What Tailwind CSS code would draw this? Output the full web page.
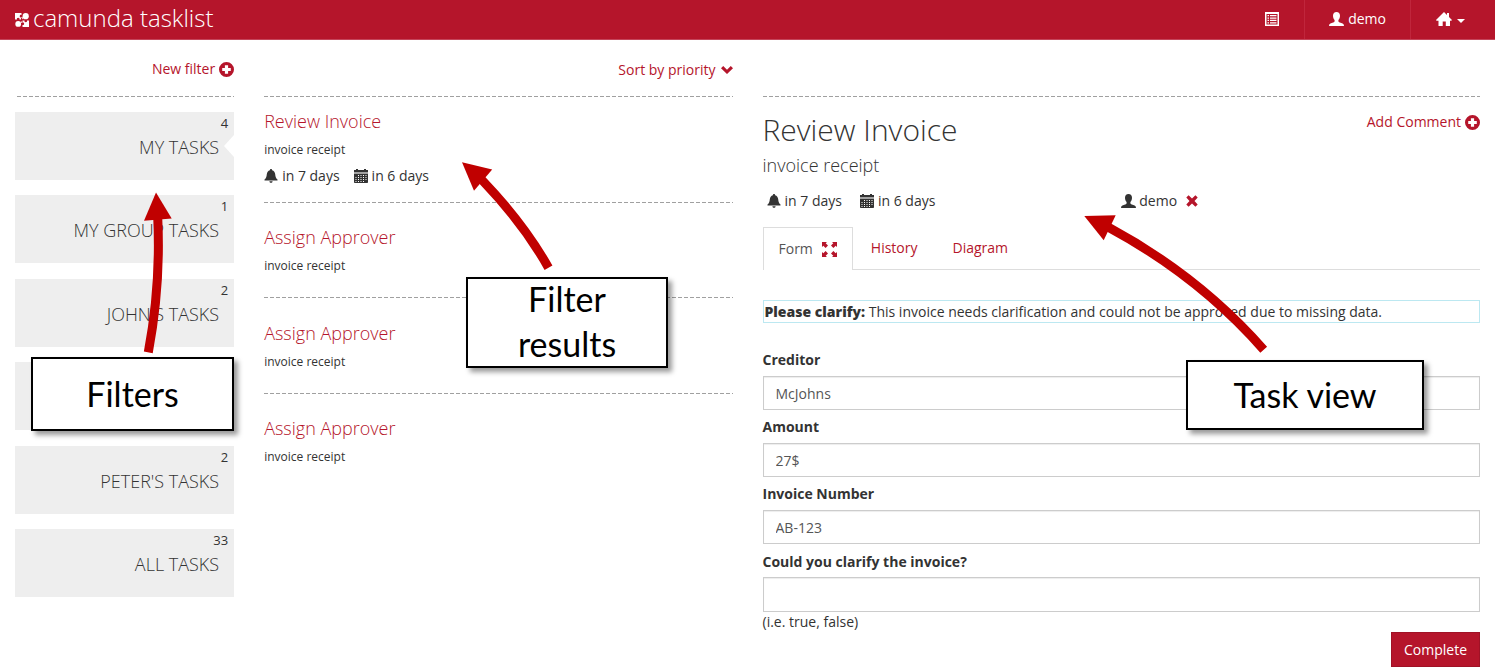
<!DOCTYPE html>
<html lang="en">
<head>
<meta charset="utf-8">
<title>camunda tasklist</title>
<script src="https://cdn.jsdelivr.net/npm/@tailwindcss/browser@4"></script>
</head>
<body class="relative min-h-screen bg-white font-['Open_Sans',sans-serif] text-[14px] leading-5 text-[#333]">
<svg class="hidden" aria-hidden="true">
  <symbol id="plus" viewBox="0 0 14 14"><path fill-rule="evenodd" d="M7 0a7 7 0 1 1 0 14A7 7 0 0 1 7 0ZM5.500 3v2.500H3v3h2.500V11h3V8.500H11v-3H8.500V3Z"/></symbol>
  <symbol id="user" viewBox="0 0 15 14"><path d="M7.500 0C9.700 0 11 1.500 11 3.800c0 1.800-.7 3.200-1.600 4.200v1.300c0 .5.3.7.8.9l3.400 1.400c.8.400 1.200.8 1.300 1.500V14H.1v-.9c.1-.7.500-1.100 1.300-1.500l3.400-1.400c.5-.2.800-.4.800-.9V8C4.700 7 4 5.600 4 3.800 4 1.500 5.300 0 7.500 0Z"/></symbol>
  <symbol id="bell" viewBox="0 0 14 14"><path d="M7 0c.7 0 1.100.5 1.100 1.200 1.900.5 2.900 2 3.100 4.100.2 2.400.8 4 2 5l.3.300v.9H.5v-.9l.3-.3c1.200-1 1.800-2.600 2-5 .2-2.100 1.200-3.600 3.100-4.100C5.900.5 6.300 0 7 0ZM5.400 12.300h3.200c-.1 1-.7 1.500-1.600 1.500s-1.500-.5-1.600-1.500Z"/></symbol>
  <symbol id="calendar" viewBox="0 0 14 14"><path d="M2 0h2v1h6V0h2v1h2v2H0V1h2Z"/><path fill-opacity=".45" d="M0 3h14v2H0Z"/><path fill-rule="evenodd" d="M0 5h14v8.200a.8.800 0 0 1-.8.800H.8a.8.800 0 0 1-.8-.8ZM4 6v1h1V6Zm2.500 0v1h1V6ZM9 6v1h1V6Zm2.500 0v1h1V6ZM1.500 8v1h1V8ZM4 8v1h1V8Zm2.500 0v1h1V8ZM9 8v1h1V8Zm2.500 0v1h1V8Zm-10 2v1h1v-1ZM4 10v1h1v-1Zm2.500 0v1h1v-1ZM9 10v1h1v-1Zm2.500 0v1h1v-1Zm-10 2v1h1v-1ZM4 12v1h1v-1Zm2.500 0v1h1v-1ZM9 12v1h1v-1Z"/></symbol>
</svg>

<header class="flex h-10 items-stretch justify-between border-b border-[#c4455a] bg-[#b5152b] text-white">
  <a href="#" class="flex items-center gap-1 pl-[15px] pb-[3px] font-['Open_Sans',sans-serif] text-[24px] font-light leading-9">
    <svg class="mt-1 size-[14px]" viewBox="0 0 14 14" fill="#fff" aria-hidden="true"><path d="M0 0h6.500v2A1.300 1.300 0 1 0 6 4.500v2H4.400a1.300 1.300 0 1 0-2.400 0H0Z"/><circle cx="10.700" cy="3.200" r="3.100"/><circle cx="3.200" cy="10.900" r="2.900"/><path d="M7.500 7.500h2a1.300 1.300 0 1 0 2.500 0h2V14H7.500v-2a1.300 1.300 0 1 0 0-2.500Z"/><path d="m6 4 2.500.5L8 6.500ZM6 8l1.500 1.500-2 .5Z"/></svg>
    <span>camunda tasklist</span>
  </a>
  <nav class="flex items-stretch">
    <a href="#" aria-label="Tasks" class="flex items-center px-[25px] pb-[2px]">
      <svg class="size-[14px]" viewBox="0 0 14 14" aria-hidden="true"><path fill="#fff" fill-rule="evenodd" d="M0 0h14v14H0ZM1.500 2v10.500h11V2Z"/><path fill="#fff" d="M2.500 3h1.500v1.300H2.500ZM5 3h6.500v1.300H5ZM2.500 5.400h1.500v1.300H2.500ZM5 5.400h6.500v1.300H5ZM2.500 7.800h1.500v1.300H2.500ZM5 7.800h6.500v1.300H5ZM2.500 10.200h1.500v1.300H2.500ZM5 10.200h6.500v1.300H5Z"/></svg>
    </a>
    <a href="#" class="flex items-center gap-1 border-l border-[#c0263c] px-6 pb-[2px]">
      <svg class="h-[14px] w-[15px]" fill="#fff" aria-hidden="true"><use href="#user"/></svg>demo
    </a>
    <button type="button" aria-label="Home menu" class="flex items-center gap-[5px] border-l border-[#c0263c] pr-[30px] pl-[25px] pb-[2px]">
      <svg class="h-[14px] w-4" viewBox="0 0 16 14" fill="#fff" aria-hidden="true"><path d="m8 0 3 3V1h2v4l3 3-.7.700H14V14H9.800V9.500H6.700V14H2.500V8.700H.5L0 8Z"/></svg>
      <svg class="mt-1 h-1 w-2" viewBox="0 0 8 4" fill="#fff" aria-hidden="true"><path d="M0 0h8L4 4Z"/></svg>
    </button>
  </nav>
</header>

<main class="grid grid-cols-12">
  <aside class="col-span-2 px-[15px]">
    <div class="flex h-14 items-center justify-end pt-[2px]">
      <a href="#" class="flex items-center gap-1 text-[#b5152b]">New filter<svg class="size-[15px]" fill="#b5152b" aria-hidden="true"><use href="#plus"/></svg></a>
    </div>
    <svg class="block h-px w-full" aria-hidden="true"><path d="M2 .5H2000" stroke="#a0a0a0" stroke-dasharray="4 2"/></svg>
    <ul class="mt-[15px] flex h-[485px] flex-col justify-between text-right">
      <li class="relative h-[68px] bg-[#eee] pt-px pr-[6px]"><div class="text-[13px]">4</div><a href="#" class="block pr-[9px] text-[18px] font-light leading-7">MY TASKS</a>
        <svg class="absolute top-[23px] right-0 h-[22px] w-[10px]" viewBox="0 0 10 22" fill="#fff" aria-hidden="true"><path d="M10 0v22L0 11Z"/></svg></li>
      <li class="h-[68px] bg-[#eee] pt-px pr-[6px]"><div class="text-[13px]">1</div><a href="#" class="block pr-[9px] text-[18px] font-light leading-7">MY GROUP TASKS</a></li>
      <li class="h-[68px] bg-[#eee] pt-px pr-[6px]"><div class="text-[13px]">2</div><a href="#" class="block pr-[9px] text-[18px] font-light leading-7">JOHN'S TASKS</a></li>
      <li class="h-[68px] bg-[#eee]"></li>
      <li class="h-[68px] bg-[#eee] pt-px pr-[6px]"><div class="text-[13px]">2</div><a href="#" class="block pr-[9px] text-[18px] font-light leading-7">PETER'S TASKS</a></li>
      <li class="h-[68px] bg-[#eee] pt-px pr-[6px]"><div class="text-[13px]">33</div><a href="#" class="block pr-[9px] text-[18px] font-light leading-7">ALL TASKS</a></li>
    </ul>
  </aside>

  <section class="col-span-4 px-[15px]">
    <div class="flex h-14 items-center justify-end pt-1">
      <button type="button" class="flex items-center gap-[5px] text-[#b5152b]">Sort by priority<svg class="h-2 w-3" viewBox="0 0 12 8" fill="#b5152b" aria-hidden="true"><path d="M0 2.200 2.200 0 6 3.700 9.800 0 12 2.200 6 8Z"/></svg></button>
    </div>
    <svg class="block h-px w-full" aria-hidden="true"><path d="M0 .5H2000" stroke="#a0a0a0" stroke-dasharray="4 2"/></svg>
    <article class="pt-[10px] pb-4">
      <h4 class="text-[18px] font-light leading-7 text-[#b5152b]"><a href="#">Review Invoice</a></h4>
      <p class="pt-[5px] text-[12px]">invoice receipt</p>
      <p class="flex items-center gap-1 pt-[6px]"><svg class="size-[14px]" fill="#333" aria-hidden="true"><use href="#bell"/></svg><span class="mr-[10px]">in 7 days</span><svg class="size-[14px]" fill="#333" aria-hidden="true"><use href="#calendar"/></svg>in 6 days</p>
    </article>
    <svg class="block h-px w-full" aria-hidden="true"><path d="M0 .5H2000" stroke="#a0a0a0" stroke-dasharray="4 2"/></svg>
    <article class="pt-5 pb-[21px]">
      <h4 class="text-[18px] font-light leading-7 text-[#b5152b]"><a href="#">Assign Approver</a></h4>
      <p class="pt-[5px] text-[12px]">invoice receipt</p>
    </article>
    <svg class="block h-px w-full" aria-hidden="true"><path d="M0 .5H2000" stroke="#a0a0a0" stroke-dasharray="4 2"/></svg>
    <article class="pt-[21px] pb-[21px]">
      <h4 class="text-[18px] font-light leading-7 text-[#b5152b]"><a href="#">Assign Approver</a></h4>
      <p class="pt-[5px] text-[12px]">invoice receipt</p>
    </article>
    <svg class="block h-px w-full" aria-hidden="true"><path d="M0 .5H2000" stroke="#a0a0a0" stroke-dasharray="4 2"/></svg>
    <article class="pt-5">
      <h4 class="text-[18px] font-light leading-7 text-[#b5152b]"><a href="#">Assign Approver</a></h4>
      <p class="pt-[5px] text-[12px]">invoice receipt</p>
    </article>
  </section>

  <section class="col-span-6 px-[15px] pt-14">
    <svg class="block h-px w-full" aria-hidden="true"><path d="M0 .5H2000" stroke="#a0a0a0" stroke-dasharray="4 2"/></svg>
    <div class="flex items-start justify-between pt-[15px]">
      <h2 class="text-[30px] font-light leading-9">Review Invoice</h2>
      <a href="#" class="flex items-center gap-1 text-[#b5152b]">Add Comment<svg class="size-[15px]" fill="#b5152b" aria-hidden="true"><use href="#plus"/></svg></a>
    </div>
    <h4 class="pt-[3px] text-[18px] font-light leading-7">invoice receipt</h4>
    <div class="grid grid-cols-2 pt-3">
      <p class="flex items-center gap-1 pl-1"><svg class="size-[14px]" fill="#333" aria-hidden="true"><use href="#bell"/></svg><span class="mr-[14px]">in 7 days</span><svg class="size-[14px]" fill="#333" aria-hidden="true"><use href="#calendar"/></svg>in 6 days</p>
      <p class="flex items-center gap-[3px]"><svg class="h-[14px] w-[15px]" fill="#333" aria-hidden="true"><use href="#user"/></svg>demo
        <button type="button" aria-label="Reset assignee" class="ml-[6px]"><svg class="size-3" viewBox="0 0 12 12" fill="#b5152b" aria-hidden="true"><path d="M.3 2.600 2.600.3 6 3.500 9.400.3l2.300 2.300L8.500 6l3.200 3.400-2.300 2.300L6 8.500l-3.400 3.200L.3 9.400 3.500 6Z"/></svg></button></p>
    </div>
    <div class="flex border-b border-[#ddd] pt-4">
      <button type="button" class="-mb-px flex h-[43px] items-center gap-[9px] border border-b-0 border-[#ddd] bg-white px-[15px] text-[#555]">Form
        <svg class="size-[15px]" viewBox="0 0 15 15" fill="#b5152b" aria-hidden="true"><path d="M0 0h5L3.700 1.300 6 3.600 3.600 6 1.300 3.700 0 5ZM15 0v5l-1.300-1.300L11.400 6 9 3.600l2.300-2.300L10 0ZM0 15v-5l1.300 1.300L3.600 9 6 11.400l-2.300 2.300L5 15ZM15 15h-5l1.300-1.300L9 11.400 11.400 9l2.300 2.300L15 10Z"/></svg></button>
      <button type="button" class="px-[18px] text-[#b5152b]">History</button>
      <button type="button" class="px-[17px] text-[#b5152b]">Diagram</button>
    </div>
    <p class="mt-[30px] border border-[#bce8f1] px-px leading-[21px]"><strong class="font-extrabold">Please clarify:</strong> This invoice needs clarification and could not be approved due to missing data.</p>
    <form class="pt-[27px]">
      <label for="creditor" class="block pb-[6px] font-bold">Creditor</label>
      <input id="creditor" type="text" value="McJohns" class="mb-[7px] block h-[34px] w-full border border-[#ccc] px-3 text-[#555] shadow-[inset_0_1px_1px_rgba(0,0,0,0.075)]">
      <label for="amount" class="block pb-[6px] font-bold">Amount</label>
      <input id="amount" type="text" value="27$" class="mb-[7px] block h-[34px] w-full border border-[#ccc] px-3 text-[#555] shadow-[inset_0_1px_1px_rgba(0,0,0,0.075)]">
      <label for="number" class="block pb-[6px] font-bold">Invoice Number</label>
      <input id="number" type="text" value="AB-123" class="mb-2 block h-[34px] w-full border border-[#ccc] px-3 text-[#555] shadow-[inset_0_1px_1px_rgba(0,0,0,0.075)]">
      <label for="clarify" class="block pb-[5px] font-bold">Could you clarify the invoice?</label>
      <input id="clarify" type="text" class="block h-[35px] w-full border border-[#ccc] px-3 text-[#555] shadow-[inset_0_1px_1px_rgba(0,0,0,0.075)]">
      <p>(i.e. true, false)</p>
      <div class="flex justify-end"><button type="submit" class="h-[35px] border border-[#a01226] bg-[#b5152b] px-3 text-white">Complete</button></div>
    </form>
  </section>
</main>

<!-- Callouts over the page -->
<svg class="pointer-events-none absolute inset-0 size-full" fill="none" stroke="#c00000" aria-hidden="true">
  <path stroke-width="9" d="M148.300 352.300Q161 285 157.700 217"/><path fill="#c00000" stroke="none" d="M156 192.500 171.700 218.500 144 220.700Z"/>
  <path stroke-width="9" d="M548.500 267.700Q524 224 482 180"/><path fill="#c00000" stroke="none" d="M462 162.300 492.200 169.500 474 190.700Z"/>
  <path stroke-width="9" d="M1263.700 349.700Q1199 276 1108 227"/><path fill="#c00000" stroke="none" d="M1084.300 216 1115.700 215.300 1103.700 240.300Z"/>
</svg>
<div class="absolute top-[357px] left-[31px] flex h-[74px] w-[203px] items-center justify-center border-2 border-black bg-white font-['Lato',sans-serif] text-[34px] text-black shadow-[4px_4px_5px_rgba(0,0,0,0.4)]">Filters</div>
<div class="absolute top-[277px] left-[466px] flex h-[91px] w-[202px] items-center justify-center border-2 border-black bg-white px-8 pb-[3px] text-center font-['Lato',sans-serif] text-[34px] leading-[45px] text-black shadow-[4px_4px_5px_rgba(0,0,0,0.4)]">Filter results</div>
<div class="absolute top-[360px] left-[1186px] flex h-[70px] w-[238px] items-center justify-center border-2 border-black bg-white font-['Lato',sans-serif] text-[34px] text-black shadow-[4px_4px_5px_rgba(0,0,0,0.4)]">Task view</div>
</body>
</html>
